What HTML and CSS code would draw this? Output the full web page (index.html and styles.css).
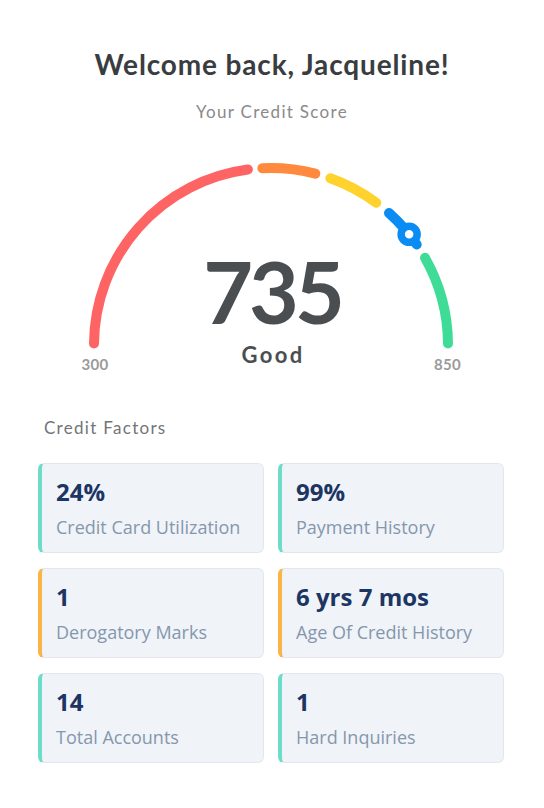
FILE: index.html
```html
<!DOCTYPE html>
<html lang="en">
<head>
<meta charset="utf-8">
<title>Credit Score</title>
<link rel="stylesheet" href="styles.css">
</head>
<body>
<main class="page">
  <h1 class="title">Welcome back, Jacqueline!</h1>
  <p class="subtitle">Your Credit Score</p>

  <div class="gauge">
    <svg class="gauge-svg" width="400" height="230" viewBox="0 0 400 230">
      <g fill="none" stroke-width="10" stroke-linecap="round">
        <path d="M22.01 193.45 A177 177 0 0 1 175.90 19.52" stroke="#ff6464"/>
        <path d="M190.35 18.21 A177 177 0 0 1 243.32 23.64" stroke="#ff8a3d"/>
        <path d="M258.37 28.26 A177 177 0 0 1 304.28 52.72" stroke="#ffd22e"/>
        <path d="M316.98 63.05 A177 177 0 0 1 344.70 94.49" stroke="#0a8cf5"/>
        <path d="M353.05 107.84 A177 177 0 0 1 375.99 193.45" stroke="#3fdc98"/>
      </g>
      <circle cx="337.14" cy="84.33" r="8" fill="#ffffff" stroke="#0a8cf5" stroke-width="7.5"/>
      <text class="gauge-end" x="23" y="220" text-anchor="middle">300</text>
      <text class="gauge-end" x="375.5" y="220" text-anchor="middle">850</text>
    </svg>
    <div class="score">
      <div class="score-value">735</div>
      <div class="score-label">Good</div>
    </div>
  </div>

  <h2 class="section-title">Credit Factors</h2>

  <section class="factors">
    <div class="factor factor-good">
      <div class="factor-value">24%</div>
      <div class="factor-label">Credit Card Utilization</div>
    </div>
    <div class="factor factor-good">
      <div class="factor-value">99%</div>
      <div class="factor-label">Payment History</div>
    </div>
    <div class="factor factor-warn">
      <div class="factor-value">1</div>
      <div class="factor-label">Derogatory Marks</div>
    </div>
    <div class="factor factor-warn">
      <div class="factor-value">6 yrs 7 mos</div>
      <div class="factor-label">Age Of Credit History</div>
    </div>
    <div class="factor factor-good">
      <div class="factor-value">14</div>
      <div class="factor-label">Total Accounts</div>
    </div>
    <div class="factor factor-good">
      <div class="factor-value">1</div>
      <div class="factor-label">Hard Inquiries</div>
    </div>
  </section>
</main>
</body>
</html>
```

FILE: styles.css
```css
* {
  box-sizing: border-box;
}

html, body {
  margin: 0;
  padding: 0;
  background: #ffffff;
}

body {
  font-family: "Lato", "Liberation Sans", sans-serif;
  color: #3b3e41;
}

.page {
  width: 544px;
  padding-top: 47px;
}

.title {
  margin: 0;
  font-size: 28px;
  line-height: 34px;
  font-weight: 700;
  letter-spacing: 0.85px;
  text-align: center;
  color: #3a3d40;
}

.subtitle {
  margin: 19px 0 0;
  font-size: 17px;
  line-height: 24px;
  letter-spacing: 1.3px;
  text-align: center;
  color: #8a8a8a;
}

.gauge {
  position: relative;
  width: 400px;
  height: 230px;
  margin: 26px auto 0;
}

.gauge-svg {
  display: block;
}

.gauge-end {
  font-family: "Lato", "Liberation Sans", sans-serif;
  font-size: 15px;
  font-weight: 700;
  letter-spacing: 0.3px;
  fill: #9a9a9a;
}

.score {
  position: absolute;
  left: 0;
  right: 0;
  top: 98px;
  text-align: center;
  color: #4b4e51;
}

.score-value {
  font-size: 86px;
  line-height: 86px;
  font-weight: 700;
  letter-spacing: -4px;
}

.score-label {
  margin-top: 10px;
  padding-left: 2px;
  font-size: 22px;
  line-height: 22px;
  font-weight: 700;
  letter-spacing: 2.4px;
}

.section-title {
  margin: 38px 0 0 44px;
  font-size: 17px;
  line-height: 20px;
  font-weight: 400;
  letter-spacing: 1.3px;
  color: #727578;
}

.factors {
  display: grid;
  grid-template-columns: 226px 226px;
  column-gap: 14px;
  row-gap: 15px;
  margin: 25px 0 0 38px;
}

.factor {
  height: 90px;
  padding: 12px 12px 0 14px;
  background: #f0f3f8;
  border: 1px solid #e3e7ec;
  border-left: 4px solid #6ddcc8;
  border-radius: 6px;
  font-family: "Open Sans", "Liberation Sans", sans-serif;
}

.factor-warn {
  border-left-color: #fbb446;
}

.factor-value {
  font-size: 24px;
  line-height: 32px;
  font-weight: 700;
  color: #1c3563;
}

.factor-label {
  margin-top: 7px;
  font-size: 18px;
  line-height: 24px;
  color: #8597ad;
}
```
